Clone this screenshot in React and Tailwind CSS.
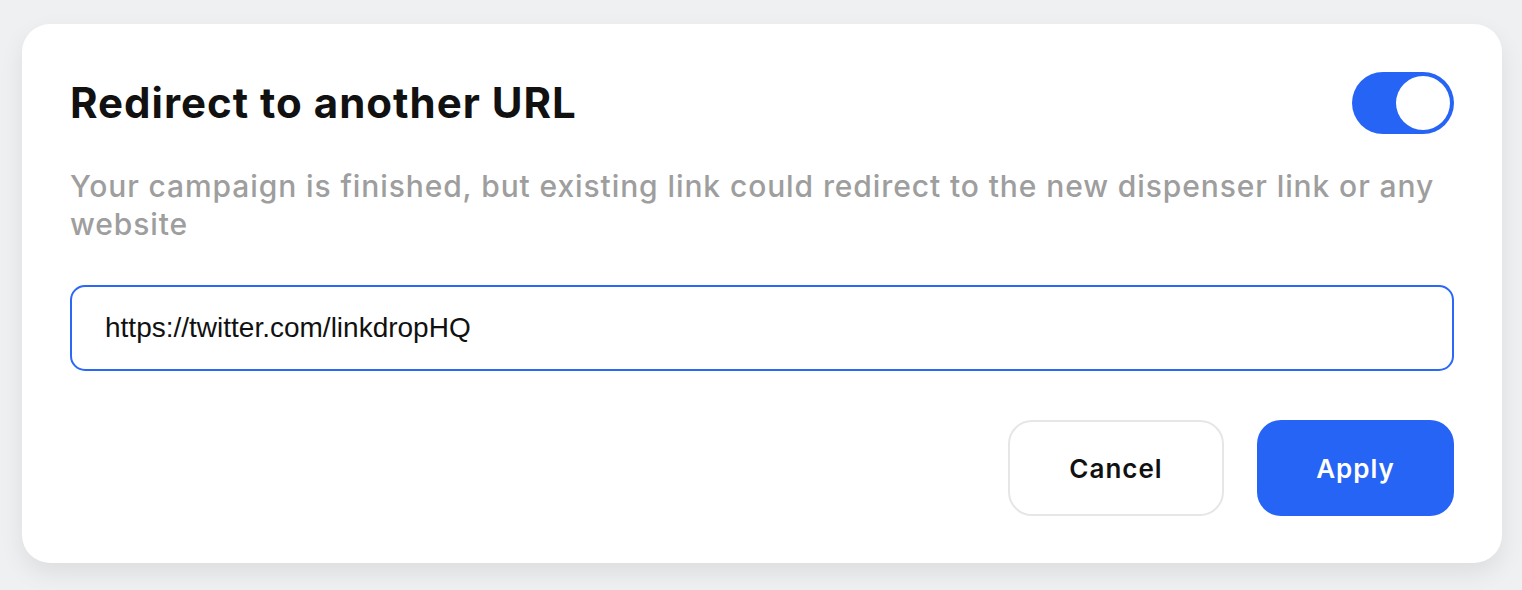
import { useState } from 'react'

// Redirect settings card: title + toggle, hint text, URL field, actions.
export default function App() {
  const [enabled, setEnabled] = useState(true)
  const [url, setUrl] = useState('https://twitter.com/linkdropHQ')

  return (
    <div className="min-h-screen bg-[#eff0f2] pl-[22px] pr-[20px] pt-[24px] pb-[27px] font-['Inter',sans-serif]">
      <div className="bg-white rounded-[28px] shadow-[0_10px_24px_rgba(0,0,0,0.08)] px-[48px] pt-[48px] pb-[47px]">
        <div className="flex items-center justify-between">
          <h1 className="text-[42px] leading-[62px] font-bold tracking-[1px] text-[#111]">
            Redirect to another URL
          </h1>
          <button
            onClick={() => setEnabled(v => !v)}
            className={`w-[102px] h-[62px] rounded-full p-[4px] flex items-center ${enabled ? 'bg-[#2664f5] justify-end' : 'bg-[#d8d8d8] justify-start'}`}>
            <span className="w-[54px] h-[54px] rounded-full bg-white" />
          </button>
        </div>

        <p className="mt-[33px] text-[30px] leading-[38px] font-medium tracking-[0.9px] text-[#9e9e9e]">
          Your campaign is finished, but existing link could redirect to the new dispenser link or any website
        </p>

        <input
          value={url}
          onChange={e => setUrl(e.target.value)}
          className="mt-[42px] block w-full h-[86px] rounded-[15px] border-2 border-[#2a68f5] px-[33px] text-[28px] text-[#111] font-['Liberation_Sans',Arial,sans-serif] outline-none"
        />

        <div className="mt-[49px] flex justify-end gap-[33px]">
          <button className="w-[216px] h-[96px] rounded-[24px] border-2 border-[#e6e6e6] bg-white text-[26px] font-semibold tracking-[1px] text-[#111]">
            Cancel
          </button>
          <button className="w-[197px] h-[96px] rounded-[24px] bg-[#2664f5] text-[26px] font-semibold tracking-[1px] text-white">
            Apply
          </button>
        </div>
      </div>
    </div>
  )
}
